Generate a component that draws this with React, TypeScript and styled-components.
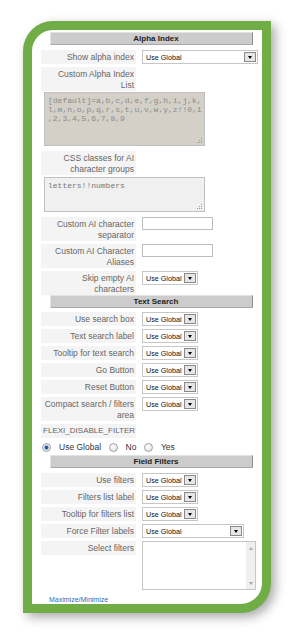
import React from 'react';
import styled, { createGlobalStyle } from 'styled-components';

const GlobalStyle = createGlobalStyle`
  html, body {
    margin: 0;
    padding: 0;
    background: #fff;
  }
  body {
    font-family: "Liberation Sans", Arial, sans-serif;
  }
`;

type SelectProps = { w: number };

const FakeSelect = ({ w }: SelectProps) => (
  <Select $w={w}>
    <span>Use Global</span>
    <Arrow />
  </Select>
);

const Grip = () => (
  <GripIcon width="7" height="7" viewBox="0 0 7 7">
    <rect x="5" y="1" width="1" height="1" fill="#999" />
    <rect x="3" y="3" width="1" height="1" fill="#999" />
    <rect x="5" y="3" width="1" height="1" fill="#999" />
    <rect x="1" y="5" width="1" height="1" fill="#999" />
    <rect x="3" y="5" width="1" height="1" fill="#999" />
    <rect x="5" y="5" width="1" height="1" fill="#999" />
  </GripIcon>
);

const App = () => {
  return (
    <>
      <GlobalStyle />
      <Page>
        <Card>
          <SectionHeader $mt={2}>Alpha Index</SectionHeader>
          <Row $mt={5}>
            <Label>Show alpha index</Label>
            <Field>
              <FakeSelect w={116} />
            </Field>
          </Row>
          <Row>
            <Label>Custom Alpha Index List</Label>
          </Row>
          <TextBox $mt={1} $h={55} $bg="#d4d0c8" $color="#8a8a8a">
            [default]=a,b,c,d,e,f,g,h,i,j,k,
            <br />
            l,m,n,o,p,q,r,s,t,u,v,w,y,z!!0,1
            <br />
            ,2,3,4,5,6,7,8,9
            <Grip />
          </TextBox>
          <Row $mt={5}>
            <Label>CSS classes for AI character groups</Label>
          </Row>
          <TextBox $mt={2} $h={35} $bg="#f0f0f0" $color="#777">
            letters!!numbers
            <Grip />
          </TextBox>
          <Row $mt={5}>
            <Label>Custom AI character separator</Label>
            <Field>
              <TextInput />
            </Field>
          </Row>
          <Row>
            <Label>Custom AI Character Aliases</Label>
            <Field>
              <TextInput />
            </Field>
          </Row>
          <Row>
            <Label>Skip empty AI characters</Label>
            <Field>
              <FakeSelect w={56} />
            </Field>
          </Row>

          <SectionHeader $mt={0}>Text Search</SectionHeader>
          <Row $mt={4}>
            <Label>Use search box</Label>
            <Field>
              <FakeSelect w={56} />
            </Field>
          </Row>
          <Row>
            <Label>Text search label</Label>
            <Field>
              <FakeSelect w={56} />
            </Field>
          </Row>
          <Row>
            <Label>Tooltip for text search</Label>
            <Field>
              <FakeSelect w={56} />
            </Field>
          </Row>
          <Row>
            <Label>Go Button</Label>
            <Field>
              <FakeSelect w={56} />
            </Field>
          </Row>
          <Row>
            <Label>Reset Button</Label>
            <Field>
              <FakeSelect w={56} />
            </Field>
          </Row>
          <Row>
            <Label>Compact search / filters area</Label>
            <Field>
              <FakeSelect w={56} />
            </Field>
          </Row>
          <Row>
            <Label $tight>FLEXI_DISABLE_FILTER</Label>
          </Row>
          <RadioRow>
            <Radio $on />
            <RadioText>Use Global</RadioText>
            <Radio />
            <RadioText>No</RadioText>
            <Radio />
            <RadioText>Yes</RadioText>
          </RadioRow>

          <SectionHeader $mt={1}>Field Filters</SectionHeader>
          <Row $mt={5}>
            <Label>Use filters</Label>
            <Field>
              <FakeSelect w={56} />
            </Field>
          </Row>
          <Row>
            <Label>Filters list label</Label>
            <Field>
              <FakeSelect w={56} />
            </Field>
          </Row>
          <Row>
            <Label>Tooltip for filters list</Label>
            <Field>
              <FakeSelect w={56} />
            </Field>
          </Row>
          <Row>
            <Label>Force Filter labels</Label>
            <Field>
              <FakeSelect w={102} />
            </Field>
          </Row>
          <Row>
            <Label>Select filters</Label>
            <Field>
              <ListBox>
                <ScrollTrack>
                  <ScrollUp />
                  <ScrollDown />
                </ScrollTrack>
              </ListBox>
            </Field>
          </Row>
          <ToggleLink href="#">Maximize/Minimize</ToggleLink>
        </Card>
      </Page>
    </>
  );
};

export default App;

const Page = styled.div`
  padding: 21px 0 0 23px;
  height: 636px;
  box-sizing: border-box;
`;

const Card = styled.div`
  width: 248px;
  height: 592px;
  box-sizing: border-box;
  border: 9px solid #70ad47;
  border-radius: 30px 0 30px 0;
  background: #fff;
  box-shadow: 4px 4px 11px rgba(0, 0, 0, 0.34);
  overflow: hidden;
  display: flex;
  flex-direction: column;
  align-items: flex-start;
  padding-left: 9px;
`;

const SectionHeader = styled.div<{ $mt: number }>`
  margin: ${(p) => p.$mt}px 0 0 9px;
  width: 203px;
  height: 13px;
  box-sizing: border-box;
  padding-left: 9px;
  background: #cccccc;
  border: 1px solid;
  border-color: #e2e2e2 #8c8c8c #a8a8a8 #e2e2e2;
  font-size: 8px;
  line-height: 11px;
  font-weight: bold;
  color: #222;
  text-align: center;
`;

const Row = styled.div<{ $mt?: number }>`
  display: flex;
  align-items: flex-start;
  margin-top: ${(p) => p.$mt ?? 3}px;
`;

const Label = styled.div<{ $tight?: boolean }>`
  width: 95px;
  min-height: 14px;
  box-sizing: border-box;
  padding: 2px ${(p) => (p.$tight ? 1 : 2)}px 1px ${(p) => (p.$tight ? 1 : 3)}px;
  background: #f4f4f4;
  color: #666;
  font-size: ${(p) => (p.$tight ? 8 : 8.5)}px;
  line-height: 10.5px;
  text-align: right;
  white-space: ${(p) => (p.$tight ? 'nowrap' : 'normal')};
`;

const Field = styled.div`
  margin-left: 6px;
  display: flex;
`;

const Select = styled.div<{ $w: number }>`
  width: ${(p) => p.$w}px;
  height: 14px;
  box-sizing: border-box;
  border: 1px solid #c6c6c6;
  background: #fff;
  display: flex;
  align-items: center;
  justify-content: space-between;
  padding: 0 1px 0 3px;
  font-size: 7.2px;
  color: #111;
  white-space: nowrap;
`;

const Arrow = styled.span`
  width: 12px;
  height: 10px;
  flex-shrink: 0;
  box-sizing: border-box;
  border: 1px solid #8a8a8a;
  background: #e6e6e6;
  display: flex;
  align-items: center;
  justify-content: center;
  &::after {
    content: '';
    border-left: 2.5px solid transparent;
    border-right: 2.5px solid transparent;
    border-top: 3px solid #000;
  }
`;

const TextBox = styled.div<{ $mt: number; $h: number; $bg: string; $color: string }>`
  position: relative;
  margin: ${(p) => p.$mt}px 0 0 3px;
  width: 161px;
  height: ${(p) => p.$h}px;
  box-sizing: border-box;
  border: 1px solid #c0c0c0;
  background: ${(p) => p.$bg};
  padding: 3px 3px;
  font-family: "Liberation Mono", "Courier New", monospace;
  font-size: 8px;
  line-height: 9px;
  color: ${(p) => p.$color};
  white-space: nowrap;
`;

const GripIcon = styled.svg`
  position: absolute;
  right: 1px;
  bottom: 1px;
`;

const TextInput = styled.input`
  width: 71px;
  height: 13px;
  box-sizing: border-box;
  border: 1px solid #bdbdbd;
  background: #fff;
  margin: 0;
  padding: 0;
`;

const RadioRow = styled.div`
  display: flex;
  align-items: center;
  height: 14px;
  margin: 2px 0 0 1px;
  font-size: 8.5px;
  color: #333;
`;

const Radio = styled.span<{ $on?: boolean }>`
  width: 9px;
  height: 9px;
  box-sizing: border-box;
  border-radius: 50%;
  border: 1px solid #a0a0a0;
  background: ${(p) =>
    p.$on
      ? 'radial-gradient(circle, #1f4f8f 0, #2b63ad 1.6px, #dfe6ee 2.4px, #f2f2f2 4px)'
      : 'radial-gradient(circle at 40% 35%, #ffffff, #dcdcdc)'};
`;

const RadioText = styled.span`
  margin: 0 7.5px 0 8px;
`;

const ListBox = styled.div`
  width: 114px;
  height: 49px;
  box-sizing: border-box;
  border: 1px solid #c6c6c6;
  background: #fff;
  display: flex;
  justify-content: flex-end;
`;

const ScrollTrack = styled.div`
  width: 9px;
  background: #efefef;
  display: flex;
  flex-direction: column;
  justify-content: space-between;
  align-items: center;
  padding: 5px 0 4px;
`;

const ScrollUp = styled.span`
  border-left: 2.5px solid transparent;
  border-right: 2.5px solid transparent;
  border-bottom: 3px solid #a8a8a8;
`;

const ScrollDown = styled.span`
  border-left: 2.5px solid transparent;
  border-right: 2.5px solid transparent;
  border-top: 3px solid #a8a8a8;
`;

const ToggleLink = styled.a`
  margin: 5px 0 0 8px;
  font-size: 7px;
  line-height: 9px;
  color: #2f6db3;
  text-decoration: none;
`;
